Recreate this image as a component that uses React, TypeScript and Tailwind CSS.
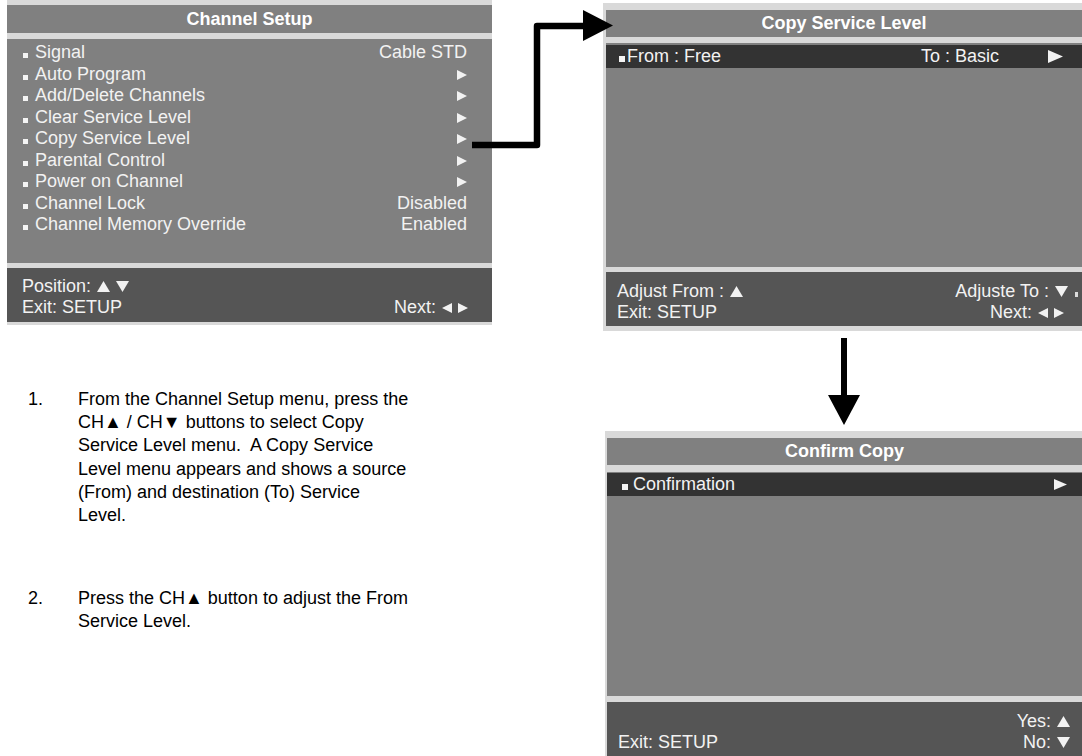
import React from "react";

type Dir = "up" | "down" | "left" | "right";

function Tri({ dir, w = 10, h = 10, className = "" }: { dir: Dir; w?: number; h?: number; className?: string }) {
  const pts = {
    up: `0,${h} ${w / 2},0 ${w},${h}`,
    down: `0,0 ${w},0 ${w / 2},${h}`,
    left: `${w},0 ${w},${h} 0,${h / 2}`,
    right: `0,0 ${w},${h / 2} 0,${h}`,
  }[dir];
  return (
    <svg width={w} height={h} viewBox={`0 0 ${w} ${h}`} className={`inline-block ${className}`}>
      <polygon points={pts} fill="currentColor" />
    </svg>
  );
}

function Bullet({ size = 5, className = "" }: { size?: number; className?: string }) {
  return (
    <span
      className={`inline-block bg-[#f4f4f4] shrink-0 ${size === 6 ? "w-[6px] h-[6px]" : "w-[5px] h-[5px]"} ${className}`}
    />
  );
}

const rows: { label: string; value: string | null }[] = [
  { label: "Signal", value: "Cable STD" },
  { label: "Auto Program", value: null },
  { label: "Add/Delete Channels", value: null },
  { label: "Clear Service Level", value: null },
  { label: "Copy Service Level", value: null },
  { label: "Parental Control", value: null },
  { label: "Power on Channel", value: null },
  { label: "Channel Lock", value: "Disabled" },
  { label: "Channel Memory Override", value: "Enabled" },
];

function ChannelSetup() {
  return (
    <div className="w-[485px] bg-[#d9d9d9] pt-[5px] pb-[3px] flex flex-col">
      <div className="h-[28px] bg-[#808080] flex items-center justify-center text-white font-bold text-[18px]">
        Channel Setup
      </div>
      <div className="mt-[6px] h-[224px] bg-[#808080] pt-[3px] pl-[16px] pr-[25px] text-[#f2f2f2] text-[18px] leading-[21.5px]">
        {rows.map((r) => (
          <div key={r.label} className="flex items-baseline justify-between">
            <span className="flex items-baseline">
              <Bullet className="mr-[7px]" />
              {r.label}
            </span>
            {r.value ? <span>{r.value}</span> : <Tri dir="right" w={10} h={10} className="align-[2px]" />}
          </div>
        ))}
      </div>
      <div className="mt-[5px] h-[54px] bg-[#555555] pt-[8px] pl-[15px] pr-[24px] text-[#f2f2f2] text-[18px] leading-[21px]">
        <div className="flex items-baseline gap-[6px]">
          <span>Position:</span>
          <Tri dir="up" w={13} h={11} />
          <Tri dir="down" w={13} h={11} />
        </div>
        <div className="flex items-baseline justify-between">
          <span>Exit: SETUP</span>
          <span className="flex items-baseline gap-[6px]">
            Next:
            <Tri dir="left" w={10} h={10} className="align-[1px]" />
            <Tri dir="right" w={10} h={10} className="align-[1px]" />
          </span>
        </div>
      </div>
    </div>
  );
}

function CopyServiceLevel() {
  return (
    <div className="h-[328px] bg-[#d9d9d9] pl-[3px] pt-[7px] pb-[5px] flex flex-col">
      <div className="h-[27px] bg-[#808080] flex items-center justify-center text-white font-bold text-[18px]">
        Copy Service Level
      </div>
      <div className="mt-[6px] h-[224px] bg-[#808080] pt-[2px] text-[#f2f2f2] text-[18px]">
        <div className="h-[23px] bg-[#333333] flex items-baseline pl-[13px] pr-[19px] leading-[23px]">
          <span className="flex items-baseline">
            <Bullet size={6} className="mr-[2px]" />
            From : Free
          </span>
          <span className="ml-auto">To : Basic</span>
          <Tri dir="right" w={15} h={13} className="ml-[49px] self-center" />
        </div>
      </div>
      <div className="mt-[5px] h-[54px] bg-[#555555] pt-[9px] pl-[11px] pr-[18px] text-[#f2f2f2] text-[18px] leading-[21px]">
        <div className="flex items-baseline justify-between">
          <span className="flex items-baseline gap-[6px]">
            Adjust From :
            <Tri dir="up" w={13} h={11} />
          </span>
          <span className="flex items-baseline gap-[6px]">
            Adjuste To :
            <Tri dir="down" w={13} h={11} />
            <span className="inline-block w-[3px] h-[5px] bg-[#dcdcdc] ml-[1px] -mr-[14px]" />
          </span>
        </div>
        <div className="flex items-baseline justify-between">
          <span>Exit: SETUP</span>
          <span className="flex items-baseline gap-[6px]">
            Next:
            <Tri dir="left" w={10} h={10} className="align-[1px]" />
            <Tri dir="right" w={10} h={10} className="align-[1px]" />
          </span>
        </div>
      </div>
    </div>
  );
}

function ConfirmCopy() {
  return (
    <div className="ml-[2px] h-[325px] bg-[#d9d9d9] pl-[2px] pt-[7px] flex flex-col">
      <div className="h-[27px] bg-[#808080] flex items-center justify-center text-white font-bold text-[18px]">
        Confirm Copy
      </div>
      <div className="mt-[7px] h-[224px] bg-[#808080] pt-[1px] text-[#f2f2f2] text-[18px]">
        <div className="h-[23px] bg-[#333333] flex items-baseline pl-[15px] pr-[15px] leading-[23px]">
          <span className="flex items-baseline">
            <Bullet size={6} className="mr-[5px]" />
            Confirmation
          </span>
          <Tri dir="right" w={13} h={11} className="ml-auto self-center" />
        </div>
      </div>
      <div className="mt-[6px] h-[54px] bg-[#555555] pt-[9px] pl-[11px] pr-[12px] text-[#f2f2f2] text-[18px] leading-[21px]">
        <div className="flex items-baseline justify-end gap-[6px]">
          Yes:
          <Tri dir="up" w={13} h={11} />
        </div>
        <div className="flex items-baseline justify-between">
          <span>Exit: SETUP</span>
          <span className="flex items-baseline gap-[6px]">
            No:
            <Tri dir="down" w={13} h={11} />
          </span>
        </div>
      </div>
    </div>
  );
}

function Instructions() {
  return (
    <div className="mt-[63px] pl-[21px] text-black text-[18px] leading-[23.2px]">
      <div className="grid grid-cols-[50px_1fr]">
        <span>1.</span>
        <span className="whitespace-nowrap">
          From the Channel Setup menu, press the
          <br />
          CH▲ / CH▼ buttons to select Copy
          <br />
          Service Level menu.&nbsp; A Copy Service
          <br />
          Level menu appears and shows a source
          <br />
          (From) and destination (To) Service
          <br />
          Level.
        </span>
      </div>
      <div className="mt-[60px] grid grid-cols-[50px_1fr]">
        <span>2.</span>
        <span className="whitespace-nowrap">
          Press the CH▲ button to adjust the From
          <br />
          Service Level.
        </span>
      </div>
    </div>
  );
}

export default function App() {
  return (
    <div className="relative w-[1082px] h-[756px] bg-white overflow-hidden flex font-['Liberation_Sans',Arial,sans-serif]">
      <div className="ml-[7px] w-[485px] flex flex-col">
        <ChannelSetup />
        <Instructions />
      </div>
      <div className="ml-[111px] w-[479px] flex flex-col pt-[3px]">
        <CopyServiceLevel />
        <div className="h-[100px]" />
        <ConfirmCopy />
      </div>
      <svg
        className="absolute inset-0 pointer-events-none"
        width={1082}
        height={756}
        viewBox="0 0 1082 756"
      >
        <path d="M472 145 H537 V26 H586" fill="none" stroke="#000" strokeWidth={6.5} strokeLinejoin="round" />
        <polygon points="583,10 613,25.5 583,41" fill="#000" />
        <path d="M844 338 V398" fill="none" stroke="#000" strokeWidth={6} />
        <polygon points="828,395 860,395 844,425" fill="#000" />
      </svg>
    </div>
  );
}
